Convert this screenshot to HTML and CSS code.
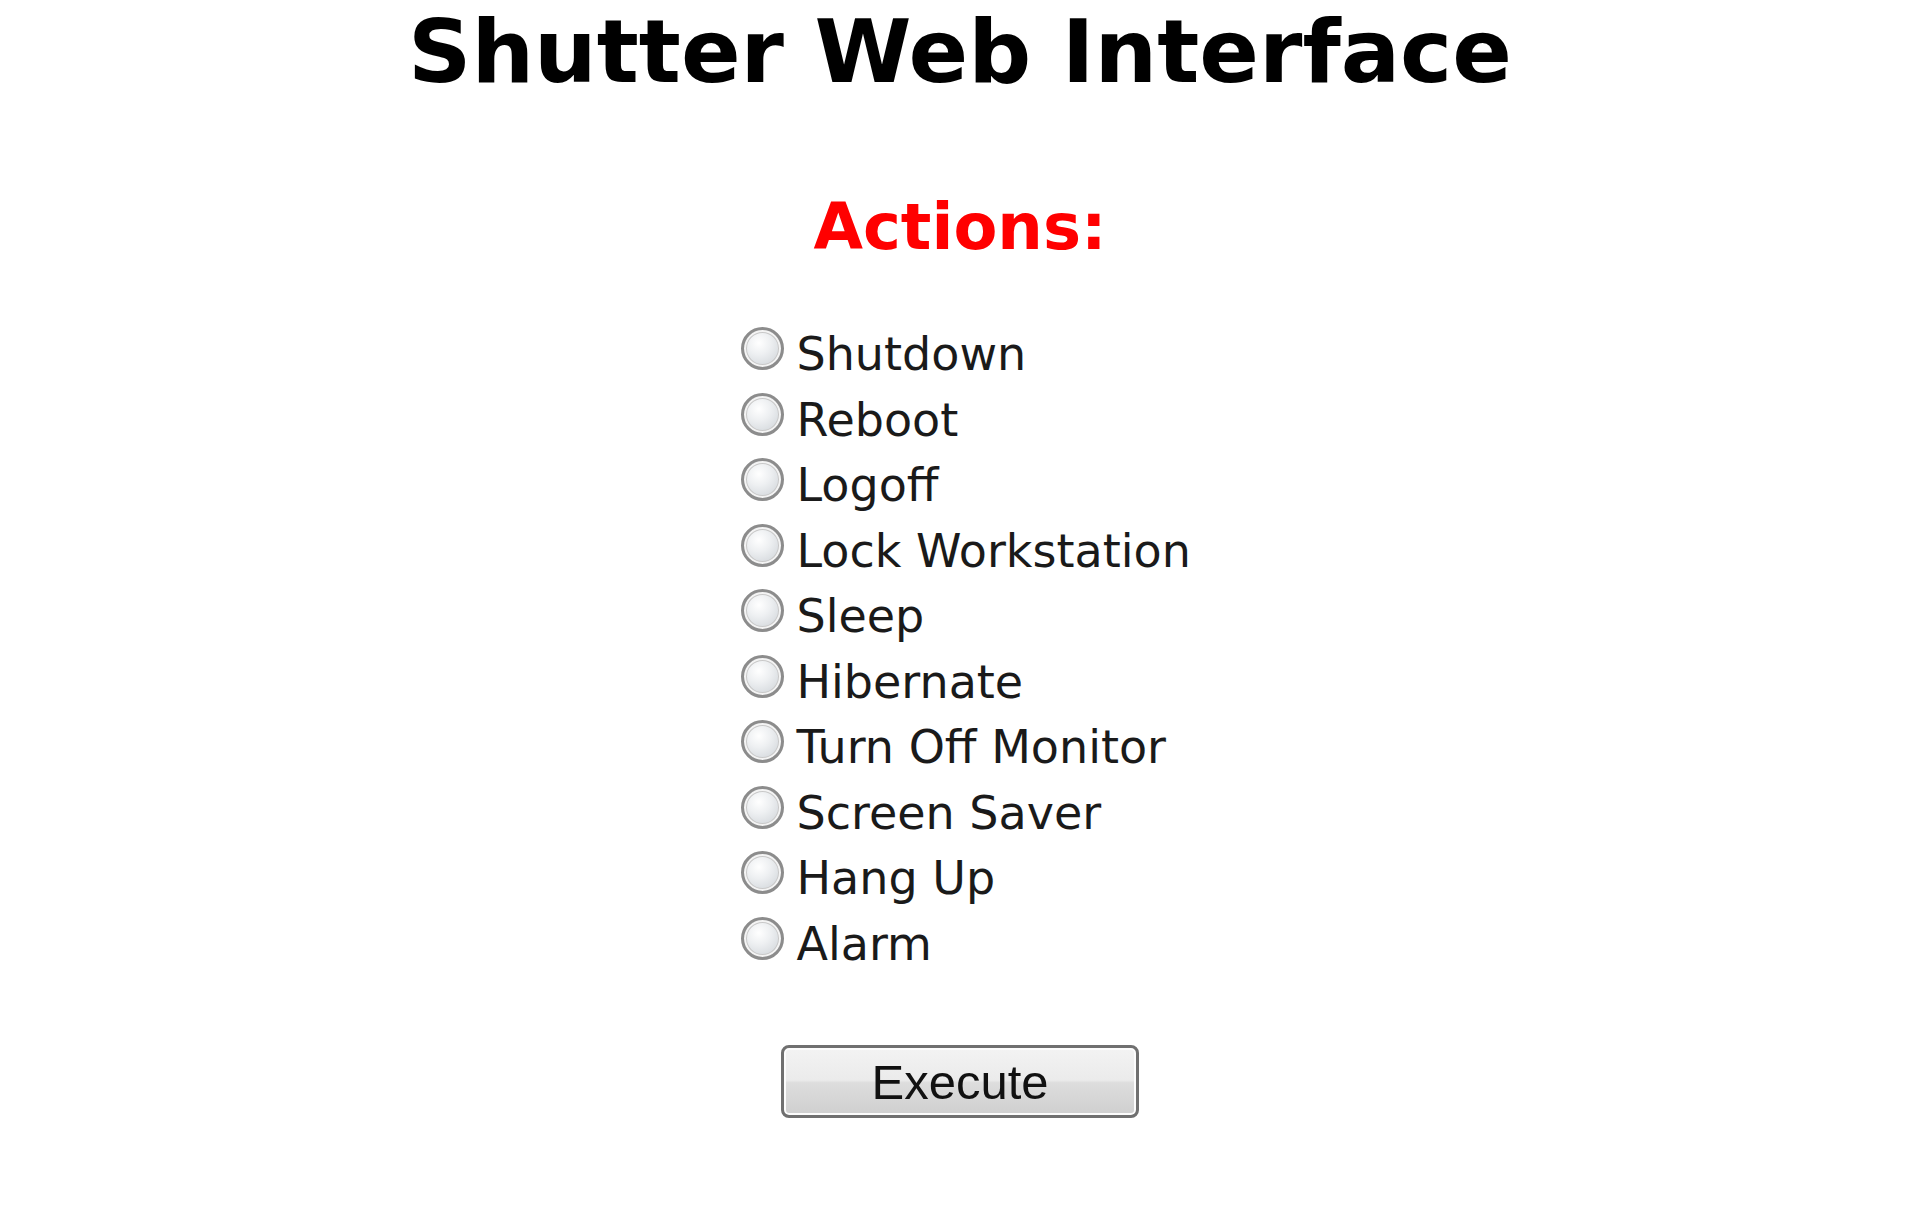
FILE: index.html
```html
<!DOCTYPE html>
<html lang="en">
<head>
  <meta charset="UTF-8" />
  <title>Shutter Web Interface</title>
  <link rel="stylesheet" href="styles.css">
</head>
<body>
  <h1>Shutter Web Interface</h1>

  <form class="actions" action="#" method="post">
    <h2>Actions:</h2>

    <div class="list">
      <label class="item"><input type="radio" name="action" value="shutdown" /><span>Shutdown</span></label>
      <label class="item"><input type="radio" name="action" value="reboot" /><span>Reboot</span></label>
      <label class="item"><input type="radio" name="action" value="logoff" /><span>Logoff</span></label>
      <label class="item"><input type="radio" name="action" value="lock" /><span>Lock Workstation</span></label>
      <label class="item"><input type="radio" name="action" value="sleep" /><span>Sleep</span></label>
      <label class="item"><input type="radio" name="action" value="hibernate" /><span>Hibernate</span></label>
      <label class="item"><input type="radio" name="action" value="monitor" /><span>Turn Off Monitor</span></label>
      <label class="item"><input type="radio" name="action" value="screensaver" /><span>Screen Saver</span></label>
      <label class="item"><input type="radio" name="action" value="hangup" /><span>Hang Up</span></label>
      <label class="item"><input type="radio" name="action" value="alarm" /><span>Alarm</span></label>
    </div>

    <div class="submit">
      <button type="submit">Execute</button>
    </div>
  </form>
</body>
</html>
```

FILE: styles.css
```css
body {
  margin: 0;
  padding: 0;
  background: #fff;
  color: #000;
  font-family: "DejaVu Sans", Verdana, sans-serif;
}

h1 {
  margin: 0;
  font-size: 88px;
  line-height: normal;
  font-weight: bold;
  text-align: center;
}

h2 {
  margin: 92px 0 0;
  font-size: 64px;
  line-height: 64px;
  font-weight: bold;
  color: #ff0000;
  text-align: center;
}

/* radio list */
.list {
  width: 440px;
  margin: 63px auto 0;
  padding-left: 1px;
}

.item {
  display: flex;
  align-items: flex-start;
  gap: 13px;
  font-size: 46px;
  line-height: 65.5px;
  color: #1a1a1a;
  white-space: nowrap;
}

.item input {
  appearance: none;
  -webkit-appearance: none;
  width: 43px;
  height: 43px;
  margin: 5px 0 0;
  flex-shrink: 0;
  border-radius: 50%;
  border: 3px solid #8c8c8c;
  box-shadow: inset 0 0 0 2px #f4f4f4, inset 0 0 0 3px #c8c8c8;
  background: radial-gradient(circle at 40% 35%, #ffffff 0%, #eef0f2 35%, #d6dade 75%, #c9cdd1 100%);
  box-sizing: border-box;
}

.item input:checked {
  background: radial-gradient(circle, #2a6fb8 0 30%, #eef0f2 32%, #d6dade 100%);
}

/* button */
.submit {
  margin-top: 68px;
  text-align: center;
}

button {
  width: 358px;
  height: 73px;
  padding: 0;
  font-family: "Liberation Sans", Arial, sans-serif;
  font-size: 49px;
  color: #111;
  border: 3px solid #707070;
  border-radius: 8px;
  background: linear-gradient(to bottom, #f3f3f3 0%, #ebebeb 48%, #dddddd 52%, #cfcfcf 100%);
  box-shadow: inset 0 0 0 2px #fcfcfc;
  cursor: pointer;
}

button:hover {
  background: linear-gradient(to bottom, #eaf6fd 0%, #d9f0fc 48%, #bee6fd 52%, #a7d9f5 100%);
  border-color: #3c7fb1;
}
```
